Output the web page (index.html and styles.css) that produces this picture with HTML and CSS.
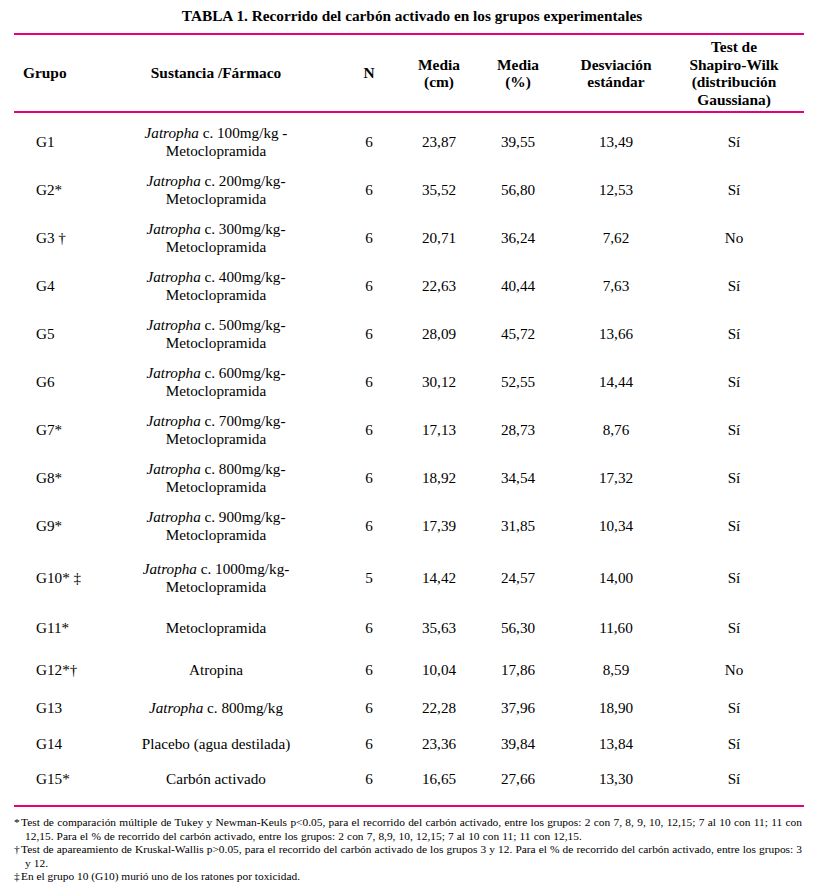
FILE: index.html
```html
<!DOCTYPE html>
<html lang="es">
<head>
<meta charset="utf-8">
<title>TABLA 1</title>
<link rel="stylesheet" href="styles.css">
</head>
<body>
<div class="page">
  <h1 class="title">TABLA 1. Recorrido del carbón activado en los grupos experimentales</h1>
  <table class="data">
    <colgroup>
      <col class="c-grupo"><col class="c-sust"><col class="c-n"><col class="c-cm"><col class="c-pct"><col class="c-dev"><col class="c-test">
    </colgroup>
    <thead>
      <tr>
        <th class="h-grupo">Grupo</th>
        <th>Sustancia /Fármaco</th>
        <th>N</th>
        <th>Media<br>(cm)</th>
        <th>Media<br>(%)</th>
        <th>Desviación<br>estándar</th>
        <th class="h-test">Test de<br>Shapiro-Wilk<br>(distribución<br>Gaussiana)</th>
      </tr>
    </thead>
    <tbody>
      <tr class="r-first"><td class="g">G1</td><td><i>Jatropha</i> c. 100mg/kg -<br>Metoclopramida</td><td>6</td><td>23,87</td><td>39,55</td><td>13,49</td><td class="t">Sí</td></tr>
      <tr class="r48"><td class="g">G2*</td><td><i>Jatropha</i> c. 200mg/kg-<br>Metoclopramida</td><td>6</td><td>35,52</td><td>56,80</td><td>12,53</td><td class="t">Sí</td></tr>
      <tr class="r48"><td class="g">G3 †</td><td><i>Jatropha</i> c. 300mg/kg-<br>Metoclopramida</td><td>6</td><td>20,71</td><td>36,24</td><td>7,62</td><td class="t">No</td></tr>
      <tr class="r48"><td class="g">G4</td><td><i>Jatropha</i> c. 400mg/kg-<br>Metoclopramida</td><td>6</td><td>22,63</td><td>40,44</td><td>7,63</td><td class="t">Sí</td></tr>
      <tr class="r48"><td class="g">G5</td><td><i>Jatropha</i> c. 500mg/kg-<br>Metoclopramida</td><td>6</td><td>28,09</td><td>45,72</td><td>13,66</td><td class="t">Sí</td></tr>
      <tr class="r48"><td class="g">G6</td><td><i>Jatropha</i> c. 600mg/kg-<br>Metoclopramida</td><td>6</td><td>30,12</td><td>52,55</td><td>14,44</td><td class="t">Sí</td></tr>
      <tr class="r48"><td class="g">G7*</td><td><i>Jatropha</i> c. 700mg/kg-<br>Metoclopramida</td><td>6</td><td>17,13</td><td>28,73</td><td>8,76</td><td class="t">Sí</td></tr>
      <tr class="r48"><td class="g">G8*</td><td><i>Jatropha</i> c. 800mg/kg-<br>Metoclopramida</td><td>6</td><td>18,92</td><td>34,54</td><td>17,32</td><td class="t">Sí</td></tr>
      <tr class="r48"><td class="g">G9*</td><td><i>Jatropha</i> c. 900mg/kg-<br>Metoclopramida</td><td>6</td><td>17,39</td><td>31,85</td><td>10,34</td><td class="t">Sí</td></tr>
      <tr class="r56"><td class="g">G10* ‡</td><td><i>Jatropha</i> c. 1000mg/kg-<br>Metoclopramida</td><td>5</td><td>14,42</td><td>24,57</td><td>14,00</td><td class="t">Sí</td></tr>
      <tr class="r44"><td class="g">G11*</td><td>Metoclopramida</td><td>6</td><td>35,63</td><td>56,30</td><td>11,60</td><td class="t">Sí</td></tr>
      <tr class="r40"><td class="g">G12*†</td><td>Atropina</td><td>6</td><td>10,04</td><td>17,86</td><td>8,59</td><td class="t">No</td></tr>
      <tr class="r36"><td class="g">G13</td><td><i>Jatropha</i> c. 800mg/kg</td><td>6</td><td>22,28</td><td>37,96</td><td>18,90</td><td class="t">Sí</td></tr>
      <tr class="r36"><td class="g">G14</td><td>Placebo (agua destilada)</td><td>6</td><td>23,36</td><td>39,84</td><td>13,84</td><td class="t">Sí</td></tr>
      <tr class="r-last"><td class="g">G15*</td><td>Carbón activado</td><td>6</td><td>16,65</td><td>27,66</td><td>13,30</td><td class="t">Sí</td></tr>
    </tbody>
  </table>
  <div class="notes">
    <p class="line full"><span class="mark">*</span>Test de comparación múltiple de Tukey y Newman-Keuls p&lt;0.05, para el recorrido del carbón activado, entre los grupos: 2 con 7, 8, 9, 10, 12,15; 7 al 10 con 11; 11 con</p>
    <p class="line cont">12,15. Para el % de recorrido del carbón activado, entre los grupos: 2 con 7, 8,9, 10, 12,15; 7 al 10 con 11; 11 con 12,15.</p>
    <p class="line full"><span class="mark">†</span>Test de apareamiento de Kruskal-Wallis p&gt;0.05, para el recorrido del carbón activado de los grupos 3 y 12. Para el % de recorrido del carbón activado, entre los grupos: 3</p>
    <p class="line cont">y 12.</p>
    <p class="line"><span class="mark">‡</span>En el grupo 10 (G10) murió uno de los ratones por toxicidad.</p>
  </div>
</div>
</body>
</html>
```

FILE: styles.css
```css
html, body {
  margin: 0;
  padding: 0;
  background: #ffffff;
}

body {
  font-family: "Liberation Serif", "Times New Roman", serif;
  color: #000;
}

.page {
  width: 824px;
}

.title {
  margin: 0;
  padding: 7px 0 8px;
  font-size: 15.3px;
  line-height: 18px;
  font-weight: bold;
  text-align: center;
}

.data {
  margin-left: 14px;
  width: 790px;
  table-layout: fixed;
  border-collapse: separate;
  border-spacing: 0;
}

.c-grupo { width: 84px; }
.c-sust { width: 236px; }
.c-n { width: 70px; }
.c-cm { width: 70px; }
.c-pct { width: 88px; }
.c-dev { width: 108px; }
.c-test { width: 134px; }

.data th,
.data td {
  padding: 0;
  text-align: center;
  vertical-align: middle;
}

.data thead tr {
  height: 80px;
}

.data th {
  border-top: 2px solid #e5007d;
  border-bottom: 2px solid #e5007d;
  font-size: 15.4px;
  line-height: 17.5px;
  font-weight: bold;
}

.data th.h-grupo {
  text-align: left;
  padding-left: 9px;
}

.data th.h-test,
.data td.t {
  padding-right: 6px;
}

.data td {
  font-size: 15.2px;
  line-height: 18.3px;
}

.data td.g {
  text-align: left;
  padding-left: 22px;
}

.data td i {
  font-style: italic;
}

.r-first { height: 53px; }
.r-first td { padding-top: 5px; }
.r48 { height: 48px; }
.r56 { height: 56px; }
.r44 { height: 44px; }
.r40 { height: 40px; }
.r36 { height: 36px; }
.r-last { height: 45px; }
.r-last td {
  padding-bottom: 9px;
  border-bottom: 2px solid #e5007d;
}

.notes {
  padding: 9px 0 0 14px;
  width: 788px;
  font-size: 11.4px;
  line-height: 13.5px;
}

.line {
  margin: 0;
  white-space: nowrap;
}

.line.full {
  text-align: justify;
  text-align-last: justify;
}

.line.cont {
  padding-left: 11px;
  word-spacing: 0.3px;
}

.mark {
  display: inline-block;
  width: 7px;
}
```
